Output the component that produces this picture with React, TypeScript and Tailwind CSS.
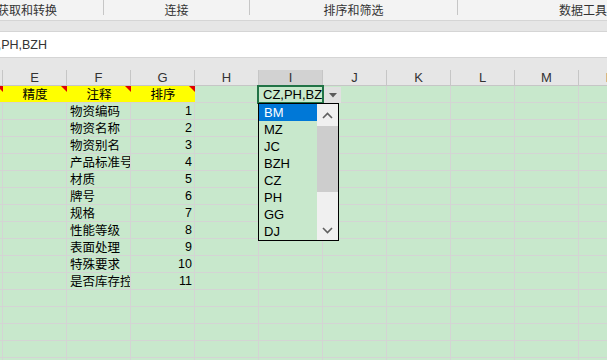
const cols = ['E', 'F', 'G', 'H', 'I', 'J', 'K', 'L', 'M', 'N'];

const fields = [
  '物资编码',
  '物资名称',
  '物资别名',
  '产品标准号',
  '材质',
  '牌号',
  '规格',
  '性能等级',
  '表面处理',
  '特殊要求',
  '是否库存控制',
];

const options = ['BM', 'MZ', 'JC', 'BZH', 'CZ', 'PH', 'GG', 'DJ'];

const cjk = "font-['Noto_Sans_CJK_SC','Noto_Sans',sans-serif]";
const latin = "font-['Liberation_Sans',Arial,sans-serif]";

function RedMark() {
  return (
    <svg className="absolute top-0 right-0" width="6" height="6" viewBox="0 0 6 6">
      <polygon points="0,0 6,0 6,6" fill="#e00000" />
    </svg>
  );
}

function Chevron({ up }: { up?: boolean }) {
  return (
    <svg width="11" height="7" viewBox="0 0 11 7">
      <polyline
        points={up ? '1,6 5.5,1.5 10,6' : '1,1 5.5,5.5 10,1'}
        fill="none"
        stroke="#606060"
        strokeWidth="1.6"
      />
    </svg>
  );
}

function HeaderRow() {
  return (
    <div className="flex h-[17px] bg-[#ffff00]">
      <div className="relative w-[3px] shrink-0 border-b border-[#d4d4d4]">
        <svg className="absolute top-0 left-0" width="3" height="6" viewBox="0 0 3 6">
          <polygon points="0,0 3,0 3,6 0,3" fill="#e00000" />
        </svg>
      </div>
      {['精度', '注释', '排序'].map((t) => (
        <div
          key={t}
          className={`relative w-[64px] shrink-0 border-b border-[#d4d4d4] flex items-center justify-center pt-px text-[12.5px] leading-none text-black ${cjk}`}
        >
          {t}
          <RedMark />
        </div>
      ))}
      {cols.slice(3).map((c) => (
        <div
          key={c}
          className="w-[64px] shrink-0 bg-[#c8e8cc] border-r border-b border-[#d4d4d4] flex items-center overflow-hidden whitespace-nowrap"
        >
          {c === 'I' && (
            <span className={`block w-full overflow-hidden pl-[4px] pt-px text-[13px] leading-none text-black ${latin}`}>
              CZ,PH,BZH
            </span>
          )}
        </div>
      ))}
    </div>
  );
}

function DataRow({ i }: { i: number }) {
  const text = fields[i];
  return (
    <div className="flex h-[17px]">
      <div className="w-[3px] shrink-0 border-r border-b border-[#d4d4d4]" />
      {cols.map((c) => (
        <div
          key={c}
          className="w-[64px] shrink-0 border-r border-b border-[#d4d4d4] flex items-center overflow-hidden whitespace-nowrap pt-px"
        >
          {c === 'F' && text && (
            <span className={`block w-full overflow-hidden pl-[3px] text-[12.5px] leading-none text-black ${cjk}`}>
              {text}
            </span>
          )}
          {c === 'G' && text && (
            <span className={`ml-auto pr-[2px] text-[12.5px] leading-none text-black ${latin}`}>{i + 1}</span>
          )}
        </div>
      ))}
    </div>
  );
}

export default function App() {
  return (
    <div className="w-[607px] h-[360px] overflow-hidden bg-[#e6e6e6] flex flex-col">
      {/* ribbon group labels */}
      <div className={`flex h-[21px] shrink-0 bg-[#f3f3f3] border-b border-[#d5d5d5] text-[12px] text-[#333] ${cjk} overflow-hidden whitespace-nowrap`}>
        <div className="w-[106px] shrink-0 flex items-center -ml-[3px]">获取和转换</div>
        <div className="w-px h-[15px] shrink-0 bg-[#c6c6c6]" />
        <div className="w-[145px] shrink-0 flex items-center justify-center">连接</div>
        <div className="w-px h-[15px] shrink-0 bg-[#c6c6c6]" />
        <div className="w-[207px] shrink-0 flex items-center justify-center">排序和筛选</div>
        <div className="w-px h-[15px] shrink-0 bg-[#c6c6c6]" />
        <div className="w-[250px] shrink-0 flex items-center justify-center">数据工具</div>
      </div>

      <div className="h-[10px] shrink-0" />

      {/* formula bar */}
      <div className="h-[27px] shrink-0 bg-white border-y border-[#d5d5d5] flex items-center overflow-hidden whitespace-nowrap pt-px">
        <span className={`-ml-[19px] text-[12.5px] text-[#333] ${latin}`}>CZ,PH,BZH</span>
      </div>

      <div className="h-[12px] shrink-0" />

      {/* column headers */}
      <div className={`flex h-[16px] shrink-0 border-b border-[#c6c6c6] text-[13px] leading-none text-[#333] ${latin}`}>
        <div className="w-[3px] shrink-0 border-r border-[#c6c6c6]" />
        {cols.map((c) => (
          <div
            key={c}
            className={`w-[64px] shrink-0 border-r border-[#c6c6c6] flex items-center justify-center ${
              c === 'I' ? 'bg-[#d2d2d2]' : ''
            }`}
          >
            {c}
          </div>
        ))}
      </div>

      {/* cells */}
      <div className="relative flex-1 bg-[#c8e8cc]">
        <HeaderRow />
        {Array.from({ length: 16 }).map((_, i) => (
          <DataRow key={i} i={i} />
        ))}

        {/* active cell */}
        <div className="absolute left-[257px] top-[-1px] w-[67px] h-[19px] border-2 border-[#217346]" />

        {/* dropdown button */}
        <div className="absolute left-[324px] top-[1px] w-[17px] h-[16px] bg-[#e0e0e0] flex items-center justify-center">
          <svg width="8" height="5" viewBox="0 0 8 5">
            <polygon points="0,0 8,0 4,4.5" fill="#5a5a5a" />
          </svg>
        </div>

        {/* dropdown list */}
        <div className={`absolute left-[258px] top-[17px] w-[81px] h-[138px] border border-black flex bg-[#c8e8cc] ${latin}`}>
          <div className="w-[58px] shrink-0 flex flex-col">
            {options.map((o, i) => (
              <div
                key={o}
                className={`h-[17px] pl-[5px] flex items-center text-[13px] leading-none ${
                  i === 0 ? 'bg-[#0078d7] text-white' : 'text-black'
                }`}
              >
                {o}
              </div>
            ))}
          </div>
          <div className="flex-1 bg-[#f0f0f0] flex flex-col">
            <div className="h-[22px] flex items-center justify-center">
              <Chevron up />
            </div>
            <div className="h-[66px] bg-[#cdcdcd]" />
            <div className="flex-1" />
            <div className="h-[20px] flex items-center justify-center">
              <Chevron />
            </div>
          </div>
        </div>
      </div>
    </div>
  );
}
